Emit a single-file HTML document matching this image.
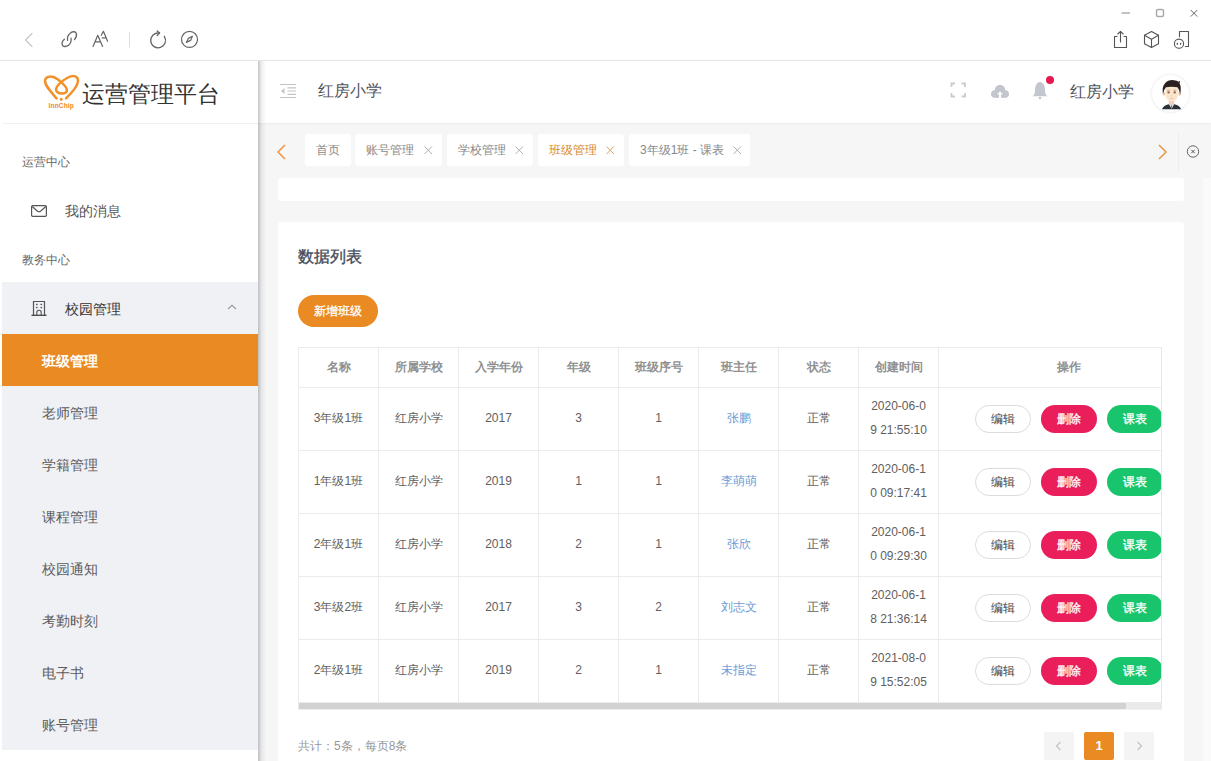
<!DOCTYPE html>
<html><head><meta charset="utf-8">
<style>
*{margin:0;padding:0;box-sizing:border-box}
html,body{width:1211px;height:761px;overflow:hidden;background:#fff;font-family:"Liberation Sans",sans-serif;color:#333}
.abs{position:absolute}
svg{position:absolute;overflow:visible}
#titlebar{position:absolute;left:0;top:0;width:1211px;height:61px;background:#fff;border-bottom:1px solid #e6e6e6}
#side{position:absolute;left:0;top:61px;width:258px;height:700px;background:#fff}
#sideshadow{position:absolute;left:258px;top:61px;width:8px;height:700px;background:linear-gradient(to right,rgba(40,50,60,.28),rgba(40,50,60,.08) 45%,rgba(0,0,0,0))}
#main{position:absolute;left:258px;top:61px;width:953px;height:700px;background:#f6f6f6}
#header{position:absolute;left:258px;top:61px;width:953px;height:62px;background:#fff;box-shadow:0 1px 2px rgba(0,0,0,.05)}
.logo-txt{position:absolute;left:82px;top:79px;font-size:23px;color:#333;white-space:nowrap}
.grp{position:absolute;left:22px;font-size:12px;color:#666}
.mi{position:absolute;left:2px;width:256px;height:52px;line-height:52px;font-size:14px;color:#5c5c5c;padding-left:40px;padding-top:1px;background:#f0f1f5;white-space:nowrap}
.mi.act{background:#e98a22;color:#fff;font-weight:bold}
.tab{position:absolute;top:134px;height:32px;background:#fff;border-radius:3px;font-size:12px;color:#888;line-height:32px;padding-left:11px;white-space:nowrap}
.tab .x{position:absolute;top:12px}
.card{position:absolute;background:#fff;border-radius:3px}
#twrap{position:absolute;left:298px;top:347px;width:864px;height:363px;overflow:hidden;border-left:1px solid #ebebeb}
table{border-collapse:collapse;table-layout:fixed;width:1120px;margin-left:-1px}
td,th{border:1px solid #ebebeb;text-align:center;font-size:12px;color:#606060;font-weight:normal;padding:0}
th{height:40px;color:#909090;font-weight:bold}
td{height:63px;line-height:24px;padding-bottom:2px}
.btn{position:relative;top:1px;display:inline-block;height:28px;line-height:28px;border-radius:14px;font-size:12px;width:56px;text-align:center;vertical-align:middle}
.b-e{border:1px solid #dcdcdc;color:#444;background:#fff;line-height:26px}
.b-d{background:#e91e5a;color:#fff;margin-left:10px;-webkit-text-stroke:.3px #fff}
.b-k{background:#19c56c;color:#fff;margin-left:10px;-webkit-text-stroke:.3px #fff}
.lnk{color:#6b9bd6}
#sb{position:absolute;left:299px;top:703px;width:863px;height:7px;background:#eaeaea;border-bottom:1px solid #f0f0f0}
#sbt{position:absolute;left:299px;top:703px;width:827px;height:6px;background:#d2d2d2}
.pg{position:absolute;top:732px;width:30px;height:28px;background:#f4f4f5;border-radius:2px}
</style></head><body>
<div id="titlebar"></div>
<div id="main"></div>
<div id="header"></div>
<div id="side"></div>
<div id="sideshadow"></div>

<!-- titlebar icons -->
<svg style="left:0;top:0" width="1211" height="60" fill="none" stroke-linecap="round" stroke-linejoin="round">
  <path d="M32 33.5 L25.5 40 L32 46.5" stroke="#c8c8c8" stroke-width="1.3"/>
  <!-- link -->
  <g stroke="#666" stroke-width="1.3">
    <path d="M67.6 40.4 C67 37.5 68.5 34.5 70.5 33 C72.5 31.3 75.5 31.2 76.3 33.5 C77 35.5 75.8 38 74.5 39.6"/>
    <path d="M64.4 39.3 C62.5 41 61.5 43.5 62.5 45.3 C63.5 47 66.5 46.8 68.5 45.3 C70.5 43.5 71.5 40.5 71 38.1"/>
  </g>
  <!-- AA -->
  <g stroke="#666" stroke-width="1.2">
    <path d="M93 46.5 L97.8 35.3 L102.6 46.5 M95.2 41.9 L100.4 41.9"/>
    <path d="M101.3 35.3 L103.4 31.3 L107.6 41.3 M102.3 37.9 L105.3 37.9"/>
  </g>
  <path d="M129.5 32 L129.5 47" stroke="#ddd" stroke-width="1"/>
  <!-- refresh -->
  <g stroke="#666" stroke-width="1.3">
    <path d="M164.3 36.3 A7.4 7.4 0 1 1 159.4 33.1"/>
    <path d="M157.2 31 L159.6 33.1 L157.2 35.5"/>
  </g>
  <!-- compass -->
  <g stroke="#666" stroke-width="1.2">
    <circle cx="189.5" cy="39.4" r="8"/>
    <path d="M186.4 42.4 L188.3 38.4 L192.4 36.2 L190.6 40.4 Z"/>
  </g>
  <!-- window controls -->
  <path d="M1122 13 L1129.5 13" stroke="#b0b0b0" stroke-width="1.4"/>
  <rect x="1156.5" y="9.5" width="7" height="7" rx="1.5" stroke="#aaa" stroke-width="1.5"/>
  <path d="M1191 10.3 L1197 16.3 M1197 10.3 L1191 16.3" stroke="#555" stroke-width=".9"/>
  <!-- share -->
  <g stroke="#555" stroke-width="1.1">
    <path d="M1117 36.5 L1114.5 36.5 L1114.5 47.5 L1126.5 47.5 L1126.5 36.5 L1124 36.5"/>
    <path d="M1120.5 42 L1120.5 31.5 M1117.8 34 L1120.5 31.3 L1123.2 34"/>
  </g>
  <!-- cube -->
  <g stroke="#555" stroke-width="1.1">
    <path d="M1151.5 31.5 L1158.5 35.3 L1158.5 43.7 L1151.5 47.5 L1144.5 43.7 L1144.5 35.3 Z"/>
    <path d="M1144.5 35.3 L1151.5 39.2 L1158.5 35.3 M1151.5 39.2 L1151.5 47.5"/>
  </g>
  <!-- device -->
  <g stroke="#555" stroke-width="1.1">
    <path d="M1179.5 36.8 L1179.5 31.5 L1188.5 31.5 L1188.5 46.5 L1185.5 46.5"/>
    <circle cx="1179" cy="43.7" r="4.6"/>
  </g>
  <ellipse cx="1177.4" cy="43.8" rx=".75" ry="1.1" fill="#555" stroke="none"/>
  <ellipse cx="1180.6" cy="43.8" rx=".75" ry="1.1" fill="#555" stroke="none"/>
</svg>

<!-- logo -->
<svg style="left:40px;top:70px" width="42" height="42" viewBox="0 0 42 42" fill="none">
  <path d="M16.6 28.4 C10.5 21.5 4.8 15.5 5 10.8 C5.2 6 12 5 18 9.5 C22.5 13 28 17.5 26.8 21.2 C25.5 24.2 17.8 24.5 16.2 20.5 C15 16.5 23 10 28 7.5 C33.5 4.8 38.3 6 38 11.2 C37.7 16.5 32 22.5 26 28.4" stroke="#f0912a" stroke-width="2.5" stroke-linecap="round"/>
  <circle cx="21.2" cy="29.2" r="1.5" fill="#f0932a"/>
  <text x="8.6" y="38.3" font-family="Liberation Sans" font-weight="bold" font-size="6.6" letter-spacing=".1" fill="#f08a1c">InnChip</text>
</svg>
<div class="logo-txt">运营管理平台</div>
<div class="abs" style="left:3px;top:123px;width:255px;height:1px;background:#f0f0f0"></div>

<div class="grp" style="top:154px">运营中心</div>
<svg style="left:0;top:0" width="60" height="330" fill="none">
  <rect x="31.6" y="205.6" width="14.8" height="10.8" rx="1.2" stroke="#555" stroke-width="1.2"/>
  <path d="M32.2 206.5 L37.5 211.2 Q39 212.3 40.5 211.2 L45.8 206.5" stroke="#555" stroke-width="1.2"/>
</svg>
<div class="abs" style="left:65px;top:203px;font-size:14px;color:#555">我的消息</div>
<div class="grp" style="top:252px">教务中心</div>
<div class="mi" style="top:282px;color:#333;padding-left:63px">校园管理</div>
<svg style="left:0;top:0" width="260" height="330" fill="none">
  <path d="M33.5 315 L33.5 301.5 L44.5 301.5 L44.5 315" stroke="#555" stroke-width="1.2"/>
  <path d="M31.5 315.3 L46.5 315.3" stroke="#444" stroke-width="1.3"/>
  <path d="M36.8 315 L36.8 312.5 A2.2 2.2 0 0 1 41.2 312.5 L41.2 315" stroke="#555" stroke-width="1.1"/>
  <g fill="#555"><rect x="36" y="303.8" width="1.6" height="1.3"/><rect x="40.5" y="303.8" width="1.6" height="1.3"/><rect x="36" y="306.9" width="1.6" height="1.3"/><rect x="40.5" y="306.9" width="1.6" height="1.3"/></g>
  <path d="M228 309 L232 305.3 L236 309" stroke="#999" stroke-width="1.1"/>
</svg>
<div class="mi act" style="top:334px">班级管理</div>
<div class="mi" style="top:386px">老师管理</div>
<div class="mi" style="top:438px">学籍管理</div>
<div class="mi" style="top:490px">课程管理</div>
<div class="mi" style="top:542px">校园通知</div>
<div class="mi" style="top:594px">考勤时刻</div>
<div class="mi" style="top:646px">电子书</div>
<div class="mi" style="top:698px">账号管理</div>

<!-- header -->
<svg style="left:0;top:0" width="1211" height="123" fill="none">
  <g stroke="#c4c4c4" stroke-width="1.2">
    <path d="M280 84.5 L296 84.5 M287.5 87.8 L296 87.8 M287.5 91 L296 91 M287.5 94.3 L296 94.3 M280 97.5 L296 97.5"/>
  </g>
  <path d="M284.5 88 L281 91 L284.5 94 Z" fill="#c4c4c4"/>
  <!-- fullscreen -->
  <g stroke="#c8cbd0" stroke-width="1.8">
    <path d="M951.5 87 L951.5 83.5 L955 83.5 M961.5 83.5 L965 83.5 L965 87 M965 93 L965 96.5 L961.5 96.5 M955 96.5 L951.5 96.5 L951.5 93"/>
  </g>
  <!-- cloud -->
  <g fill="#c3c6cd"><circle cx="1000" cy="90" r="5.2"/><circle cx="994.8" cy="94" r="3.8"/><circle cx="1005.2" cy="94" r="3.8"/><rect x="994.8" y="92" width="10.4" height="5.8"/></g>
  <path d="M997 94.5 L1000 91.2 L1003 94.5 Z" fill="#fff"/>
  <rect x="999" y="94" width="2" height="4" fill="#fff"/>
  <!-- bell -->
  <path d="M1032.8 96.2 Q1035 94.5 1035 90 Q1035 83.2 1040 81.7 Q1045 83.2 1045 90 Q1045 94.5 1047.3 96.2 Z" fill="#c3c6cd"/>
  <circle cx="1040" cy="98" r="1.3" fill="#c3c6cd"/>
  <circle cx="1050" cy="80" r="4" fill="#e8174f"/>
</svg>
<div class="abs" style="left:318px;top:81px;font-size:16px;color:#50545c">红房小学</div>
<div class="abs" style="left:1070px;top:82px;font-size:16px;color:#50545c">红房小学</div>
<!-- avatar -->
<div class="abs" style="left:1152px;top:75px;width:37px;height:37px;border-radius:50%;background:#fff;box-shadow:0 0 2px 1px rgba(120,100,120,.10)"></div>
<svg style="left:1152px;top:75px" width="37" height="37" viewBox="0 0 37 37">
  <path d="M10 34.3 Q11.5 30.2 16.5 29.3 L22.5 29.3 Q27.5 30.2 29.2 34.3 Z" fill="#2b323c"/>
  <path d="M17 29.3 L19.6 33.8 L22.2 29.3 Z" fill="#f2f2f2"/>
  <path d="M19 30.5 L19.6 34 L20.2 30.5 Z" fill="#3a4450"/>
  <rect x="16.8" y="24" width="5.4" height="5.6" fill="#f0cfc0"/>
  <ellipse cx="11.9" cy="18.7" rx="1.3" ry="1.8" fill="#e8c4a0"/>
  <ellipse cx="27.6" cy="18.9" rx="1.3" ry="1.8" fill="#e8c4a0"/>
  <path d="M13.3 12 Q13 22 15 24.5 Q17.5 26.5 19.7 26.5 Q22 26.5 24.3 24.5 Q26.3 22 26 12 Z" fill="#fbe5cc"/>
  <path d="M11 19 Q9.8 11.5 13 8.2 Q16.5 4.5 22 5.2 Q25 5.5 26.5 6.8 L28 5.8 L27.6 8.6 Q29.6 12.5 28.2 19.2 Q27 14 25.5 12.3 Q19.5 11.3 14 12.3 Q12.2 14 11 19 Z" fill="#2a2220"/>
  <ellipse cx="16.6" cy="17.4" rx="1.3" ry="1.1" fill="#9a6a48"/>
  <ellipse cx="22.7" cy="17.4" rx="1.3" ry="1.1" fill="#9a6a48"/>
  <path d="M15 15.3 L18 15.1 M21.3 15.1 L24.3 15.3" stroke="#b08060" stroke-width=".6"/>
  <path d="M19.3 20.8 L20 20.8" stroke="#d0a080" stroke-width=".6"/>
  <path d="M18.2 23.2 Q19.7 23.8 21.2 23.2" stroke="#e0b090" stroke-width=".7" fill="none"/>
</svg>

<!-- tabs bar -->
<svg style="left:0;top:0" width="1211" height="200" fill="none">
  <path d="M285 145 L278 152 L285 159" stroke="#eb9845" stroke-width="1.5"/>
  <path d="M1159 145 L1166 152 L1159 159" stroke="#eb9845" stroke-width="1.5"/>
  <path d="M1178.5 133 L1178.5 171" stroke="#ededed" stroke-width="1"/>
  <circle cx="1193" cy="151.5" r="5.7" stroke="#666" stroke-width="1"/>
  <path d="M1191.3 149.8 L1194.7 153.2 M1194.7 149.8 L1191.3 153.2" stroke="#555" stroke-width="1"/>
</svg>
<div class="tab" style="left:305px;width:46px">首页</div>
<div class="tab" style="left:355px;width:87px">账号管理<svg class="x" style="left:69px" width="9" height="9"><path d="M.5 .5 L8 8 M8 .5 L.5 8" stroke="#b0b0b0" stroke-width="1"/></svg></div>
<div class="tab" style="left:447px;width:86px">学校管理<svg class="x" style="left:68px" width="9" height="9"><path d="M.5 .5 L8 8 M8 .5 L.5 8" stroke="#b0b0b0" stroke-width="1"/></svg></div>
<div class="tab" style="left:538px;width:86px;color:#d98a2e">班级管理<svg class="x" style="left:68px" width="9" height="9"><path d="M.5 .5 L8 8 M8 .5 L.5 8" stroke="#e0a060" stroke-width="1"/></svg></div>
<div class="tab" style="left:629px;width:121px">3年级1班 - 课表<svg class="x" style="left:104px" width="9" height="9"><path d="M.5 .5 L8 8 M8 .5 L.5 8" stroke="#b0b0b0" stroke-width="1"/></svg></div>

<div class="abs" style="left:1203px;top:178px;width:8px;height:583px;background:#fafafa"></div>
<div class="card" style="left:278px;top:178px;width:906px;height:23px"></div>
<div class="card" style="left:278px;top:222px;width:906px;height:560px"></div>
<div class="abs" style="left:298px;top:247px;font-size:16px;color:#444b58;-webkit-text-stroke:.35px #444b58">数据列表</div>
<div class="abs" style="left:298px;top:295px;width:80px;height:32px;border-radius:16px;background:#e98a22;color:#fff;font-size:12px;line-height:32px;text-align:center;-webkit-text-stroke:.3px #fff">新增班级</div>

<div id="twrap">
<table>
<colgroup><col style="width:80px"><col style="width:80px"><col style="width:80px"><col style="width:80px"><col style="width:80px"><col style="width:80px"><col style="width:80px"><col style="width:80px"><col style="width:260px"><col></colgroup>
<tr><th>名称</th><th>所属学校</th><th>入学年份</th><th>年级</th><th>班级序号</th><th>班主任</th><th>状态</th><th>创建时间</th><th>操作</th><th></th></tr>
<tr><td>3年级1班</td><td>红房小学</td><td>2017</td><td>3</td><td>1</td><td class="lnk">张鹏</td><td>正常</td><td>2020-06-0<br>9 21:55:10</td><td><span class="btn b-e">编辑</span><span class="btn b-d">删除</span><span class="btn b-k">课表</span></td><td></td></tr>
<tr><td>1年级1班</td><td>红房小学</td><td>2019</td><td>1</td><td>1</td><td class="lnk">李萌萌</td><td>正常</td><td>2020-06-1<br>0 09:17:41</td><td><span class="btn b-e">编辑</span><span class="btn b-d">删除</span><span class="btn b-k">课表</span></td><td></td></tr>
<tr><td>2年级1班</td><td>红房小学</td><td>2018</td><td>2</td><td>1</td><td class="lnk">张欣</td><td>正常</td><td>2020-06-1<br>0 09:29:30</td><td><span class="btn b-e">编辑</span><span class="btn b-d">删除</span><span class="btn b-k">课表</span></td><td></td></tr>
<tr><td>3年级2班</td><td>红房小学</td><td>2017</td><td>3</td><td>2</td><td class="lnk">刘志文</td><td>正常</td><td>2020-06-1<br>8 21:36:14</td><td><span class="btn b-e">编辑</span><span class="btn b-d">删除</span><span class="btn b-k">课表</span></td><td></td></tr>
<tr><td>2年级1班</td><td>红房小学</td><td>2019</td><td>2</td><td>1</td><td class="lnk">未指定</td><td>正常</td><td>2021-08-0<br>9 15:52:05</td><td><span class="btn b-e">编辑</span><span class="btn b-d">删除</span><span class="btn b-k">课表</span></td><td></td></tr>
</table>
</div>
<div class="abs" style="left:1161px;top:347px;width:1px;height:363px;background:#e6e6e6"></div>
<div id="sb"></div><div id="sbt"></div>

<div class="abs" style="left:298px;top:738px;font-size:12px;color:#999">共计：5条，每页8条</div>
<div class="pg" style="left:1044px"><svg style="left:0;top:0" width="30" height="28" fill="none"><path d="M16.5 10 L12.5 14 L16.5 18" stroke="#c0c4cc" stroke-width="1.3"/></svg></div>
<div class="pg" style="left:1084px;background:#e98a22;color:#fff;font-weight:bold;font-size:13px;text-align:center;line-height:28px">1</div>
<div class="pg" style="left:1124px"><svg style="left:0;top:0" width="30" height="28" fill="none"><path d="M13.5 10 L17.5 14 L13.5 18" stroke="#c0c4cc" stroke-width="1.3"/></svg></div>

</body></html>
